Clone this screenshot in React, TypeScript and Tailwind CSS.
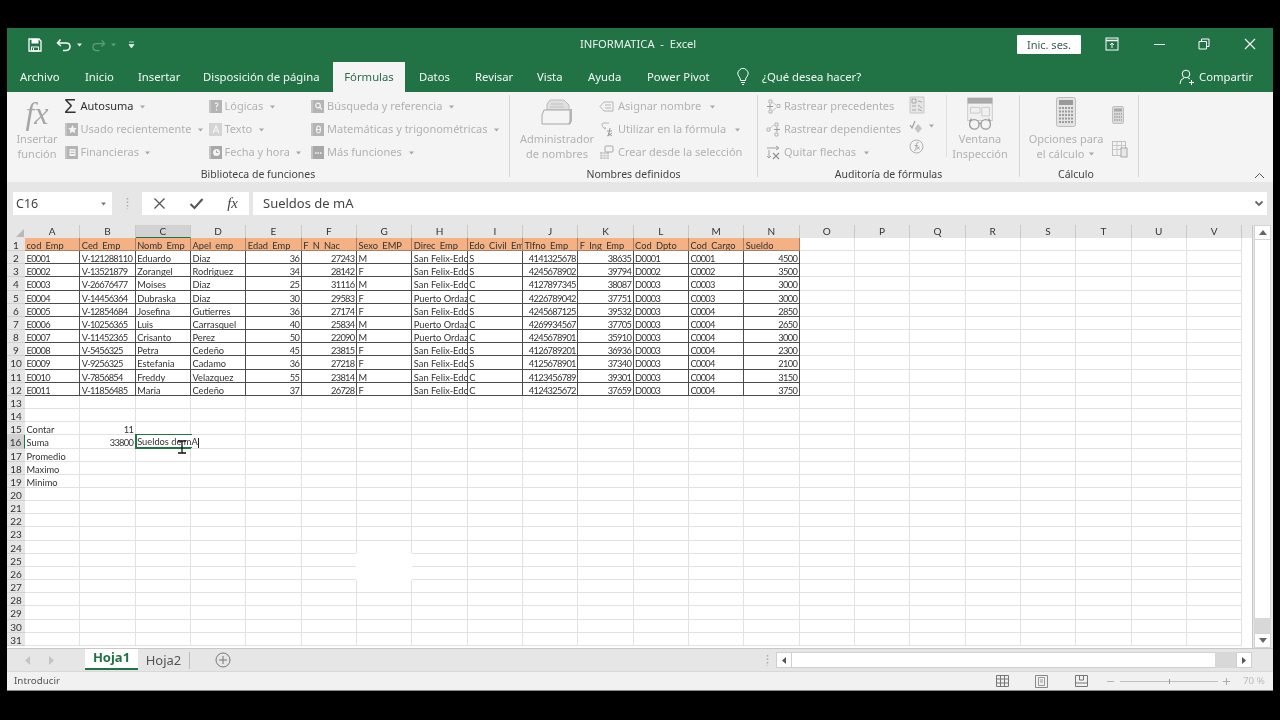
import React from "react";

const COLS = ["A","B","C","D","E","F","G","H","I","J","K","L","M","N","O","P","Q","R","S","T","U","V"];
const HEAD = ["cod_Emp","Ced_Emp","Nomb_Emp","Apel_emp","Edad_Emp","F_N_Nac","Sexo_EMP","Direc_Emp","Edo_Civil_Emp","Tlfno_Emp","F_Ing_Emp","Cod_Dpto","Cod_Cargo","Sueldo"];
const SF = "San Felix-Edo";
const PO = "Puerto Ordaz";
const DATA: string[][] = [
  ["E0001","V-121288110","Eduardo","Diaz","36","27243","M",SF,"S","4141325678","38635","D0001","C0001","4500"],
  ["E0002","V-13521879","Zorangel","Rodriguez","34","28142","F",SF,"S","4245678902","39794","D0002","C0002","3500"],
  ["E0003","V-26676477","Moises","Diaz","25","31116","M",SF,"C","4127897345","38087","D0003","C0003","3000"],
  ["E0004","V-14456364","Dubraska","Diaz","30","29583","F",PO,"C","4226789042","37751","D0003","C0003","3000"],
  ["E0005","V-12854684","Josefina","Gutierres","36","27174","F",SF,"S","4245687125","39532","D0003","C0004","2850"],
  ["E0006","V-10256365","Luis","Carrasquel","40","25834","M",PO,"C","4269934567","37705","D0003","C0004","2650"],
  ["E0007","V-11452365","Crisanto","Perez","50","22090","M",PO,"C","4245678901","35910","D0003","C0004","3000"],
  ["E0008","V-5456325","Petra","Cedeño","45","23815","F",SF,"S","4126789201","36936","D0003","C0004","2300"],
  ["E0009","V-9256325","Estefania","Cadamo","36","27218","F",SF,"S","4125678901","37340","D0003","C0004","2100"],
  ["E0010","V-7856854","Freddy","Velazquez","55","23814","M",SF,"C","4123456789","39301","D0003","C0004","3150"],
  ["E0011","V-11856485","Maria","Cedeño","37","26728","F",SF,"C","4124325672","37659","D0003","C0004","3750"],
];
const RIGHT = new Set([4,5,9,10,13]);
const LABELS: Record<number,string> = {15:"Contar",16:"Suma",17:"Promedio",18:"Maximo",19:"Minimo"};

function Caret({ c = "#a8a8a8" }: { c?: string }) {
  return <svg width="7" height="4" viewBox="0 0 7 4" className="shrink-0 ml-1"><path d="M1 0.5h5L3.5 3.5z" fill={c} /></svg>;
}

function Ico({ k }: { k: string }) {
  const g = "#b4b4b4";
  const common = { width: 15, height: 15, viewBox: "0 0 15 15", fill: "none", className: "shrink-0" };
  switch (k) {
    case "q": return <svg {...common}><rect x="1" y="1" width="2" height="13" fill="#c4c4c4"/><rect x="3" y="1" width="11" height="13" fill={g}/><path d="M7 5q1.5-2 3 0q0 1.5-1.5 2v1.5M8.5 10v1.5" stroke="#f4f4f4" strokeWidth="1.2"/></svg>;
    case "star": return <svg {...common}><rect x="1" y="1" width="2" height="13" fill="#c4c4c4"/><rect x="3" y="1" width="11" height="13" fill={g}/><path d="M8.5 3l1.4 3 3 .3-2.3 2 .7 3-2.8-1.6-2.8 1.6.7-3-2.3-2 3-.3z" fill="#f4f4f4"/></svg>;
    case "a": return <svg {...common}><rect x="1" y="1" width="13" height="13" fill="#d4d4d4"/><path d="M5 11l3-7 3 7M6 9h4" stroke="#f4f4f4" strokeWidth="1.2"/></svg>;
    case "fin": return <svg {...common}><rect x="1" y="1" width="2" height="13" fill="#c4c4c4"/><rect x="3" y="1" width="11" height="13" fill={g}/><rect x="5.5" y="4" width="6" height="7" fill="#f4f4f4"/><path d="M6.5 6h4M6.5 8.5h4" stroke={g}/></svg>;
    case "clock": return <svg {...common}><rect x="1" y="1" width="2" height="13" fill="#c4c4c4"/><rect x="3" y="1" width="11" height="13" fill="#a8a8a8"/><circle cx="8.5" cy="7.5" r="3.5" fill="#f4f4f4"/><path d="M8.5 5.5v2h2" stroke="#a8a8a8"/></svg>;
    case "search": return <svg {...common}><rect x="1" y="1" width="2" height="13" fill="#c4c4c4"/><rect x="3" y="1" width="11" height="13" fill={g}/><circle cx="8" cy="6.5" r="2.3" stroke="#f4f4f4" strokeWidth="1.2"/><path d="M10 8.5l2 2" stroke="#f4f4f4" strokeWidth="1.3"/></svg>;
    case "theta": return <svg {...common}><rect x="1" y="1" width="2" height="13" fill="#c4c4c4"/><rect x="3" y="1" width="11" height="13" fill={g}/><ellipse cx="8.5" cy="7.5" rx="2" ry="3.5" stroke="#f4f4f4" strokeWidth="1.1"/><path d="M6.5 7.5h4" stroke="#f4f4f4"/></svg>;
    case "more": return <svg {...common}><rect x="1" y="1" width="2" height="13" fill="#c4c4c4"/><rect x="3" y="1" width="11" height="13" fill="#a8a8a8"/><path d="M5 8h7" stroke="#f4f4f4" strokeWidth="1.5" strokeDasharray="1.5 1"/></svg>;
    case "tag": return <svg {...common}><path d="M5 3h9v9H5L1 7.5z" stroke={g}/><path d="M6 6h6M6 9h6" stroke={g}/></svg>;
    case "use": return <svg {...common}><path d="M4 1h6M4 1a3 3 0 003 5l-2 1" stroke={g}/><path d="M8 14q2 0 2-3l1-5M8 9h5M9 11l4 3M13 11l-4 3" stroke="#9a9a9a"/></svg>;
    case "create": return <svg {...common}><rect x="1" y="7" width="9" height="7" fill="#c8c8c8"/><path d="M1 9.500h9M1 11.800h9M4 7v7M7 7v7" stroke="#f4f4f4" strokeWidth=".7"/><rect x="6" y="1" width="8" height="6" rx="1" stroke="#a8a8a8" fill="#f4f4f4"/></svg>;
    case "prec": return <svg {...common}><path d="M3 1h3v3H3zM3 11h3v3H3zM11 5.500h3v3h-3z" stroke={g}/><path d="M1 7.500h6M4 5v5" stroke="#9a9a9a"/><path d="M6 3l4 3M6 12l4-3" stroke="#c4c4c4"/></svg>;
    case "dep": return <svg {...common}><path d="M1 6h3v3H1zM9 1h3v3H9zM9 11h3v3H9z" stroke={g}/><path d="M8 7.500h6M11 5v5" stroke="#9a9a9a"/><path d="M4 6l4-3" stroke="#c4c4c4"/></svg>;
    case "arrows": return <svg {...common}><path d="M1 3h11M10 1l3 2-3 2" stroke="#a0a0a0"/><path d="M3 5v8M1 11l2 2 2-2" stroke="#a0a0a0"/><path d="M7 8l6 6M13 8l-6 6" stroke="#909090" strokeWidth="1.2"/></svg>;
    case "show": return <svg {...common} width="16" height="18" viewBox="0 0 16 18"><path d="M1 1h14v16H1z" fill="#e6e6e6" stroke="#c8c8c8"/><path d="M3 3h4v4H3zM9 5l4 1M3 10h4M9 9l4 3M3 14h4M9 13l4 2" stroke="#a8a8a8"/></svg>;
    case "check": return <svg {...common}><path d="M1 6l2 3 3-7" stroke="#a0a0a0" strokeWidth="1.2"/><path d="M9 5l4 4.500-4 4.500-3.500-4.500z" fill="#c4c4c4"/></svg>;
    case "eval": return <svg {...common}><circle cx="7.500" cy="7.500" r="6.500" stroke="#b0b0b0"/><path d="M9.500 3.500q-2-.5-2 2l-.7 5q-.3 1.500-1.800 1M5.500 6.500h3.500M8 7.500l2.500 3M10.500 7.500l-2.500 3" stroke="#a0a0a0" strokeWidth=".9"/></svg>;
    case "calcS": return <svg {...common} width="12" height="18" viewBox="0 0 12 18"><rect x=".5" y=".5" width="11" height="17" rx="1.500" fill="#dcdcdc" stroke="#c0c0c0"/><rect x="2" y="2.500" width="8" height="3" fill="#a8a8a8"/><path d="M2 8h8M2 11h8M2 14h8" stroke="#a0a0a0" strokeWidth="1.300" strokeDasharray="1.500 .8"/></svg>;
    case "calcT": return <svg {...common} width="16" height="18" viewBox="0 0 16 18"><rect x=".5" y="1.500" width="13" height="14" fill="#f4f4f4" stroke="#c0c0c0"/><path d="M.5 5.500h13M.5 9.500h13M5 1.500v14M9.500 1.500v14" stroke="#c8c8c8"/><rect x="9" y="8" width="6" height="9" fill="#e8e8e8" stroke="#a8a8a8"/></svg>;
    default: return null;
  }
}

function RItem({ icon, text, caret, gap = "gap-[1.500px]", bold }: { icon: React.ReactNode; text: string; caret?: boolean; gap?: string; bold?: boolean }) {
  return (
    <div className={`flex items-center h-[23px] whitespace-nowrap ${gap} ${bold ? "text-[#2e2e2e]" : "text-[#b2b2b2]"}`}>
      {icon}
      <span>{text}</span>
      {caret && <Caret />}
    </div>
  );
}

function Group({ w, label, sep = true, children, labelClass = "" }: { w: string; label: string; sep?: boolean; children: React.ReactNode; labelClass?: string }) {
  return (
    <div className={`${w} h-[82px] shrink-0 flex flex-col ${sep ? "border-r border-[#d6d6d6]" : ""}`}>
      <div className="flex h-[72px] shrink-0">{children}</div>
      <div className={`text-center text-[10.500px] leading-[14px] text-[#444] ${labelClass}`}>{label}</div>
    </div>
  );
}

function Big({ w, icon, l1, l2, caret }: { w: string; icon: React.ReactNode; l1: string; l2: string; caret?: boolean }) {
  return (
    <div className={`${w} shrink-0 flex flex-col items-center text-[#b2b2b2] text-center whitespace-nowrap`}>
      <div className="h-[36px] flex items-start pt-[2px] justify-center">{icon}</div>
      <div className="leading-[15px]">{l1}</div>
      <div className="leading-[15px] flex items-center">{l2}{caret && <Caret />}</div>
    </div>
  );
}

function Tab({ t, w }: { t: string; w: string }) {
  return <span className={`${w} shrink-0 text-white/95 whitespace-nowrap`}>{t}</span>;
}

function App() {
  const rows = Array.from({ length: 31 }, (_, i) => i + 1);
  return (
    <div className="w-[1280px] h-[720px] bg-black pt-[28px] pl-[7px] overflow-hidden font-['Noto_Sans',sans-serif] blur-[0.35px]">
      <div className="w-[1266px] h-[663px] bg-[#e6e6e6] flex flex-col overflow-hidden">
        {/* Title */}
        <div className="h-[34px] bg-[#217346] flex items-center shrink-0 text-white">
          <div className="w-[573px] shrink-0 flex items-center">
            <svg width="14" height="14" viewBox="0 0 14 14" className="ml-[21px]" fill="none"><path d="M1 1h10l2 2v10H1z" stroke="#fff" strokeWidth="1.300"/><rect x="3.500" y="1" width="7" height="4.500" fill="#fff"/><rect x="3.500" y="9" width="7" height="4" stroke="#fff"/><path d="M5.500 10v3" stroke="#fff"/></svg>
            <svg width="16" height="14" viewBox="0 0 16 14" className="ml-[14px]" fill="none"><path d="M4.500 1.500L1.500 5l3.500 3" stroke="#fff" strokeWidth="1.500"/><path d="M2 5h8q4 0 4 3.500t-4 4H7" stroke="#fff" strokeWidth="1.500"/></svg>
            <Caret c="#e8f2ec" />
            <svg width="15" height="13" viewBox="0 0 16 14" className="ml-[8px]" fill="none"><path d="M11.500 1.500l3 3.500-3.500 3" stroke="#5e9d7b" strokeWidth="1.400"/><path d="M14 5H6q-4 0-4 3.500t4 4h3" stroke="#5e9d7b" strokeWidth="1.400"/></svg>
            <Caret c="#5e9d7b" />
            <svg width="7" height="8" viewBox="0 0 7 8" className="ml-[11px]"><path d="M1 1h5M1 3.500h5L3.500 7z" stroke="#dcebe3" fill="#dcebe3" strokeWidth=".8"/></svg>
          </div>
          <span className="w-[437px] shrink-0 text-[11.200px] whitespace-nowrap text-white/90 -mt-[2px]">INFORMATICA&nbsp; -&nbsp; Excel</span>
          <button className="w-[64px] shrink-0 h-[19px] bg-white rounded-[1px] text-[#3d5c4b] text-[11px] leading-[19px] -mt-[1px]">Inic. ses.</button>
          <svg width="14" height="14" viewBox="0 0 14 14" className="ml-[24px] shrink-0 -mt-[2px]" fill="none"><rect x="1" y="1" width="12" height="12" stroke="#fff"/><path d="M1 3.500h12" stroke="#fff" strokeWidth="1.500"/><path d="M7 11V6M5 8l2-2 2 2" stroke="#fff"/></svg>
          <span className="ml-[34.500px] shrink-0 w-[11px] h-px bg-white/90 -mt-[2px]" />
          <svg width="12" height="12" viewBox="0 0 12 12" className="ml-[33.500px] shrink-0 -mt-[2px]" fill="none"><path d="M1 3.500h7.500V11H1zM3.500 3V1H11v7.500H9" stroke="#fff"/></svg>
          <svg width="12" height="12" viewBox="0 0 12 12" className="ml-[34px] shrink-0 -mt-[2px]" fill="none"><path d="M1 1l10 10M11 1L1 11" stroke="#fff" strokeWidth="1.100"/></svg>
        </div>
        {/* Tabs */}
        <div className="h-[30px] bg-[#217346] flex items-center shrink-0 text-[11.300px] pl-[13px]">
          <Tab t="Archivo" w="w-[65px]" />
          <Tab t="Inicio" w="w-[53px]" />
          <Tab t="Insertar" w="w-[65px]" />
          <Tab t="Disposición de página" w="w-[130px]" />
          <span className="w-[72px] shrink-0 h-[30px] bg-[#f4f4f4] text-[#2c6b4a] flex items-center justify-center">Fórmulas</span>
          <Tab t="Datos" w="w-[56px] ml-[14px]" />
          <Tab t="Revisar" w="w-[62px]" />
          <Tab t="Vista" w="w-[51px]" />
          <Tab t="Ayuda" w="w-[59px]" />
          <Tab t="Power Pivot" w="w-[89px]" />
          <div className="w-[26px] shrink-0">
            <svg width="14" height="18" viewBox="0 0 14 18" fill="none"><path d="M4.500 12.500Q4.500 10 3 8.500a5 5 0 118 0Q9.500 10 9.500 12.500zM5 14.500h4M6 16.500h2" stroke="#fff"/></svg>
          </div>
          <Tab t="¿Qué desea hacer?" w="w-[417px]" />
          <svg width="15" height="16" viewBox="0 0 15 16" className="shrink-0" fill="none"><circle cx="7" cy="5" r="3.800" stroke="#fff"/><path d="M1 15q0-5 4-6M9 9l2 1M10 13.500h5M12.500 11v5" stroke="#fff"/></svg>
          <Tab t="Compartir" w="ml-[5px]" />
        </div>
        {/* Ribbon */}
        <div className="h-[90px] bg-[#f4f4f4] shrink-0 flex pt-[3px] text-[11px] relative">
          <Group w="w-[503px]" label="Biblioteca de funciones">
            <Big w="w-[57px] pl-[3px]" icon={<span className="font-['Liberation_Serif',serif] italic text-[32px] leading-[32px] text-[#a6a6a6]">fx</span>} l1="Insertar" l2="función" />
            <div className="w-[144px] shrink-0">
              <RItem bold icon={<span className="w-[15px] text-[20px] leading-[15px] text-[#333] font-['Liberation_Sans',sans-serif]">Σ</span>} text="Autosuma" caret />
              <RItem icon={<Ico k="star"/>} text="Usado recientemente" caret />
              <RItem icon={<Ico k="fin"/>} text="Financieras" caret />
            </div>
            <div className="w-[102px] shrink-0">
              <RItem icon={<Ico k="q"/>} text="Lógicas" caret />
              <RItem icon={<Ico k="a"/>} text="Texto" caret />
              <RItem icon={<Ico k="clock"/>} text="Fecha y hora" caret />
            </div>
            <div className="shrink-0">
              <RItem gap="gap-[2px]" icon={<Ico k="search"/>} text="Búsqueda y referencia" caret />
              <RItem gap="gap-[2px]" icon={<Ico k="theta"/>} text="Matemáticas y trigonométricas" caret />
              <RItem gap="gap-[2px]" icon={<Ico k="more"/>} text="Más funciones" caret />
            </div>
          </Group>
          <Group w="w-[248px]" label="Nombres definidos">
            <Big w="w-[92px] pl-[2px]" icon={<svg width="34" height="30" viewBox="0 0 34 30" fill="none"><path d="M10 3h14l5 5v5H7V7z" fill="#e0e0e0" stroke="#bcbcbc"/><path d="M7 13h-3L2 18v9h28v-14z" fill="#f4f4f4" stroke="#a8a8a8"/><path d="M31 12v12l-2 3" stroke="#b4b4b4" strokeWidth="2"/><path d="M11 7h12M10 10h14" stroke="#c0c0c0"/></svg>} l1="Administrador" l2="de nombres" />
            <div className="shrink-0 -ml-[3px]">
              <RItem gap="gap-[4px]" icon={<Ico k="tag"/>} text="Asignar nombre" caret />
              <RItem gap="gap-[4px]" icon={<Ico k="use"/>} text="Utilizar en la fórmula" caret />
              <RItem gap="gap-[4px]" icon={<Ico k="create"/>} text="Crear desde la selección" />
            </div>
          </Group>
          <Group w="w-[262px]" label="Auditoría de fórmulas">
            <div className="w-[151px] shrink-0 pl-[8px]">
              <RItem gap="gap-[3px]" icon={<Ico k="prec"/>} text="Rastrear precedentes" />
              <RItem gap="gap-[3px]" icon={<Ico k="dep"/>} text="Rastrear dependientes" />
              <RItem gap="gap-[3px]" icon={<Ico k="arrows"/>} text="Quitar flechas" caret />
            </div>
            <div className="w-[38px] shrink-0 flex flex-col border-r border-[#e0e0e0] h-[62px]">
              <div className="h-[23px] flex items-center"><Ico k="show"/></div>
              <div className="h-[23px] flex items-center"><Ico k="check"/><Caret /></div>
              <div className="h-[23px] flex items-center"><Ico k="eval"/></div>
            </div>
            <Big w="w-[66px]" icon={<svg width="28" height="34" viewBox="0 0 28 36" fill="none"><rect x="1" y="1" width="26" height="24" fill="#f0f0f0" stroke="#c8c8c8"/><rect x="1" y="1" width="26" height="6" fill="#a8a8a8"/><path d="M4 11h10v6H4zM16 11h8v9h-8z" stroke="#c8c8c8"/><circle cx="8" cy="29" r="5" stroke="#9a9a9a" strokeWidth="1.400" fill="#f4f4f4"/><circle cx="20" cy="29" r="5" stroke="#9a9a9a" strokeWidth="1.400" fill="#f4f4f4"/><path d="M13 28h2M3 26l2-3M25 26l-2-3" stroke="#9a9a9a" strokeWidth="1.400"/></svg>} l1="Ventana" l2="Inspección" />
          </Group>
          <Group w="w-[119px]" label="Cálculo" labelClass="pr-[6px]">
            <Big w="w-[92px]" icon={<svg width="20" height="30" viewBox="0 0 20 30"><rect x=".5" y=".5" width="19" height="29" rx="2" fill="#e4e4e4" stroke="#bcbcbc"/><rect x="3" y="3" width="14" height="5" fill="#9a9a9a"/><path d="M3 11h14M3 14.500h14M3 18h14M3 21.500h14M3 25h14" stroke="#9c9c9c" strokeWidth="1.800" strokeDasharray="2 1"/></svg>} l1="Opciones para" l2="el cálculo" caret />
            <div className="flex flex-col items-start pt-[11px] gap-[16px]">
              <Ico k="calcS"/>
              <Ico k="calcT"/>
            </div>
          </Group>
          <svg width="11" height="7" viewBox="0 0 11 7" className="absolute right-[8px] bottom-[3px]" fill="none"><path d="M1 6l4.500-4.500L10 6" stroke="#555"/></svg>
        </div>
        {/* Formula bar */}
        <div className="h-[43px] shrink-0 flex items-start pt-[10px] bg-[#e6e6e6] pl-[6px] text-[13px] text-[#444]">
          <div className="w-[99px] h-[23px] bg-white flex items-center justify-between px-[3px] pr-[5px]">
            <span className="text-[12.500px] mt-[1px]">C16</span><Caret c="#777" />
          </div>
          <div className="w-[30px] h-[23px] flex items-center justify-center">
            <svg width="3" height="11" viewBox="0 0 3 11"><path d="M1.500 0v11" stroke="#aaa" strokeWidth="1.500" strokeDasharray="1.500 2"/></svg>
          </div>
          <div className="w-[107px] h-[23px] bg-white flex items-center justify-between pl-[11px] pr-[11px]">
            <svg width="13" height="13" viewBox="0 0 13 13" fill="none"><path d="M1.500 1.500l10 10M11.500 1.500l-10 10" stroke="#555" strokeWidth="1.300"/></svg>
            <svg width="15" height="13" viewBox="0 0 15 13" fill="none"><path d="M1.500 7l4 4 8-9" stroke="#555" strokeWidth="2"/></svg>
            <span className="font-['Liberation_Serif',serif] italic text-[15px] text-[#444]">fx</span>
          </div>
          <div className="ml-[4px] w-[1014px] h-[23px] bg-white flex items-center justify-between pl-[10px] pr-[3px]">
            <span>Sueldos de mA</span>
            <svg width="10" height="7" viewBox="0 0 10 7" fill="none"><path d="M1.500 1.500l3.500 3.500 3.500-3.500" stroke="#666" strokeWidth="1.800"/></svg>
          </div>
        </div>
        {/* Grid + vertical scroll */}
        <div className="flex h-[423px] shrink-0 relative">
          <div className="w-[1246px] shrink-0 overflow-hidden bg-white border-r border-[#c8c8c8] font-['Lato',sans-serif] text-[9.300px] leading-[15px] text-[#333]">
            <div className="flex h-[13px] bg-[#e6e6e6] leading-[13px]">
              <div className="w-[18px] shrink-0 flex items-end justify-end pr-[1px] pb-[1px]"><svg width="8" height="8" viewBox="0 0 8 8"><path d="M8 0v8H0z" fill="#b8b8b8"/></svg></div>
              {COLS.map((c, i) => (
                <div key={c} className={`w-[55.330px] shrink-0 text-center text-[10px] border-r border-[#c8c8c8] ${i === 2 ? "bg-[#d2d2d2] border-b border-b-[#217346]" : ""}`}>{c}</div>
              ))}
              <div className="w-[55.330px] shrink-0" />
            </div>
            {rows.map((r) => {
              const d = r === 1 ? HEAD : r <= 12 ? DATA[r - 2] : null;
              return (
                <div key={r} className="flex h-[13.170px]">
                  <div className={`w-[18px] shrink-0 text-center text-[10px] leading-[14px] border-b border-[#d0d0d0] ${r === 16 ? "bg-[#d2d2d2] border-r border-r-[#217346]" : "bg-[#e6e6e6]"}`}>{r}</div>
                  {COLS.map((_, ci) => {
                    const inTable = d !== null && ci < 14;
                    const val = d && ci < 14 ? d[ci] : ci === 0 ? LABELS[r] : ci === 1 && r === 15 ? "11" : ci === 1 && r === 16 ? "33800" : "";
                    const right = (r > 1 && r <= 12 && RIGHT.has(ci)) || (ci === 1 && (r === 15 || r === 16));
                    const tight = r > 1 && !!val && /\d/.test(val);
                    const border = r === 1 && ci < 14
                      ? "bg-[#f4b183] border-r border-b border-[#a88066]"
                      : inTable
                      ? "border-r border-b border-[#4c4c4c]"
                      : "border-r border-b border-[#e2e2e2]";
                    const active = r === 16 && ci === 2;
                    return (
                      <div key={ci} className={`w-[55.330px] shrink-0 relative whitespace-nowrap px-[1.500px] ${active ? "" : "overflow-hidden"} ${right ? "text-right" : ""} ${tight ? "tracking-[-0.7px]" : ""} ${border}`}>
                        {val}
                        {active && (
                          <>
                            <div className="absolute -left-[1px] -top-[1px] w-[57px] h-[14.500px] border-2 border-[#217346]" />
                            <div className="absolute left-[1px] top-0 w-[62px] h-[12px] bg-white px-[0.500px] leading-[13px] overflow-visible">Sueldos de mA<span className="inline-block w-px h-[10px] bg-[#222] align-middle" /></div>
                          </>
                        )}
                      </div>
                    );
                  })}
                </div>
              );
            })}
          </div>
          <div className="w-[1px] shrink-0" />
          <div className="w-[17px] shrink-0 bg-[#d8d8d8] flex flex-col">
            <div className="h-[15px] bg-white flex items-center justify-center border border-[#d4d4d4]"><svg width="8" height="5" viewBox="0 0 8 5"><path d="M0 5l4-5 4 5z" fill="#666"/></svg></div>
            <div className="h-[378px] bg-white border-x border-[#d4d4d4]" />
            <div className="h-[15px]" />
            <div className="h-[15px] bg-white flex items-center justify-center border border-[#d4d4d4]"><svg width="8" height="5" viewBox="0 0 8 5"><path d="M0 0l4 5 4-5z" fill="#666"/></svg></div>
          </div>
          {/* video artefact: washed-out patch on the sheet */}
          <div className="absolute left-[349px] top-[328px] w-[56px] h-[27px] bg-white" />
          {/* I-beam mouse pointer */}
          <svg width="10" height="14" viewBox="0 0 10 14" className="absolute left-[170px] top-[215px]" fill="none"><path d="M1 1h8M1 13h8M5 1v12" stroke="#111" strokeWidth="1.300"/></svg>
        </div>
        {/* Sheet tabs */}
        <div className="h-[23px] shrink-0 bg-[#e6e6e6] flex items-center border-t border-[#c8c8c8] relative">
          <svg width="6" height="9" viewBox="0 0 6 9" className="ml-[18px]"><path d="M5 0v9L0 4.500z" fill="#c4c4c4"/></svg>
          <svg width="6" height="9" viewBox="0 0 6 9" className="ml-[17px]"><path d="M1 0v9l5-4.500z" fill="#c4c4c4"/></svg>
          <div className="ml-[31px] w-[53px] h-[21px] bg-white border-b-2 border-[#217346] text-[#217346] font-bold text-[13px] flex items-center justify-center -mt-[2px]">Hoja1</div>
          <div className="w-[52px] text-[#555] text-[13px] text-center border-r border-[#bcbcbc] h-[17px] leading-[17px]">Hoja2</div>
          <svg width="16" height="16" viewBox="0 0 16 16" className="ml-[25px]" fill="none"><circle cx="8" cy="8" r="7" stroke="#777"/><path d="M8 4v8M4 8h8" stroke="#777"/></svg>
          <svg width="3" height="11" viewBox="0 0 3 11" className="ml-[535px]"><path d="M1.500 0v11" stroke="#aaa" strokeWidth="1.500" strokeDasharray="1.500 2"/></svg>
          <div className="ml-[7px] w-[16px] h-[16px] bg-white flex items-center justify-center border border-[#d0d0d0]"><svg width="4" height="7" viewBox="0 0 4 7"><path d="M4 0v7L0 3.500z" fill="#555"/></svg></div>
          <div className="w-[423px] h-[16px] bg-white border-y border-[#d0d0d0]" />
          <div className="w-[21px] h-[16px] bg-[#d8d8d8]" />
          <div className="w-[16px] h-[16px] bg-white flex items-center justify-center border border-[#d0d0d0]"><svg width="4" height="7" viewBox="0 0 4 7"><path d="M0 0v7l4-3.500z" fill="#555"/></svg></div>
        </div>
        {/* Status bar */}
        <div className="flex-1 bg-[#f1f1f1] flex items-center border-t border-[#d8d8d8] border-b border-b-[#8a8a8a] text-[9.800px] text-[#555]">
          <span className="ml-[7px] w-[45px] mt-[1px]">Introducir</span>
          <svg width="13" height="12" viewBox="0 0 13 12" className="ml-[936.500px] shrink-0" fill="none"><path d="M.5.500h12v11H.5zM.5 4h12M.5 8h12M4.500.500v11M8.500.500v11" stroke="#777"/></svg>
          <svg width="13" height="13" viewBox="0 0 13 13" className="ml-[26px] shrink-0" fill="none"><path d="M.5.500h12v12H.5z" stroke="#888"/><path d="M3.500 2.500h6v8h-6zM5 5h3M5 7h3" stroke="#999"/></svg>
          <svg width="13" height="12" viewBox="0 0 13 12" className="ml-[27px] shrink-0" fill="none"><path d="M.5.500h12v11H.5zM.5 8h12M4.500.500V5h4V.500" stroke="#777"/></svg>
          <span className="ml-[19px] w-[7px] h-px bg-[#b4b4b4]" />
          <div className="ml-[6.500px] w-[98px] h-px bg-[#c0c0c0] flex items-center justify-center"><span className="w-px h-[5px] bg-[#999]" /></div>
          <svg width="7" height="7" viewBox="0 0 7 7" className="ml-[5px] shrink-0"><path d="M3.500 0v7M0 3.500h7" stroke="#aaa"/></svg>
          <span className="ml-[13px] text-[#bcbcbc] whitespace-nowrap">70 %</span>
        </div>
      </div>
    </div>
  );
}

export default App;
